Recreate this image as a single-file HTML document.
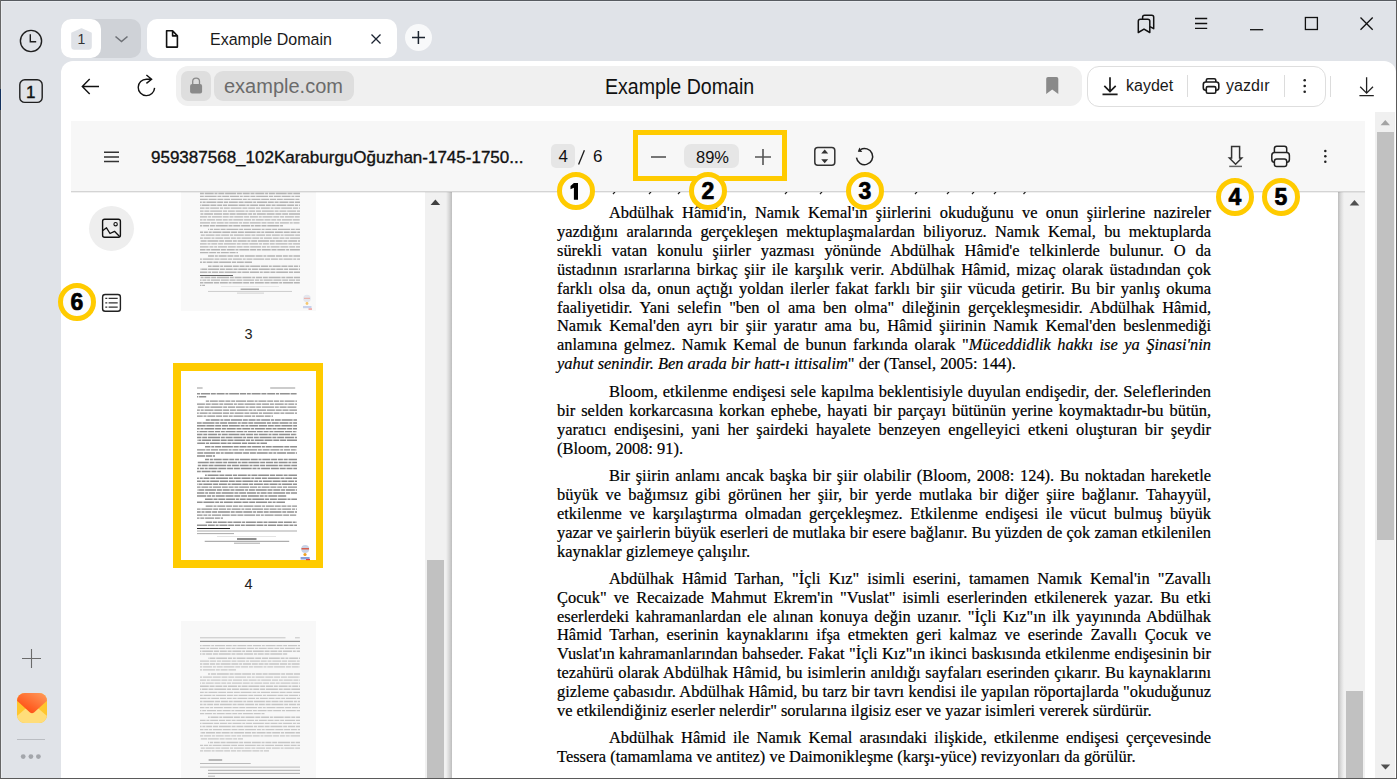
<!DOCTYPE html><html><head><meta charset="utf-8"><style>
*{box-sizing:border-box;margin:0;padding:0}
html,body{width:1397px;height:779px;overflow:hidden}
body{position:relative;background:#e0e3e8;font-family:"Liberation Sans",sans-serif;color:#000}
.a{position:absolute}
svg.a{overflow:visible}
.tx{position:absolute;white-space:nowrap}
.ln{position:absolute;left:557px;width:654px;font-family:"Liberation Serif",serif;font-size:16.45px;line-height:19px;color:#000;white-space:nowrap;text-align:justify;text-align-last:justify;-webkit-text-stroke:0.2px #000}
.ln.l{text-align-last:left}
.ln.i1{left:609px;width:602px}
.num{position:absolute;width:38px;height:38px;border-radius:50%;border:5px solid #ffcb00;background:#fcfcfc;font-weight:bold;font-size:23px;line-height:28.8px;text-align:center;color:#000;-webkit-text-stroke:0.7px #000}
</style></head><body>
<div class="a" style="left:0;top:0;width:1397px;height:1px;background:#575b60"></div>
<div class="a" style="left:0;top:0;width:1px;height:779px;background:#666"></div>
<div class="a" style="left:1px;top:1px;width:1395px;height:1px;background:#e9ecf0"></div>
<div class="a" style="left:1px;top:1px;width:1px;height:777px;background:#e9ecf0"></div>
<div class="a" style="left:0;top:89px;width:1px;height:21px;background:#15325e"></div>
<div class="a" style="left:61px;top:19px;width:80px;height:39px;background:#cfd2d7;border-radius:10px"></div>
<div class="a" style="left:61px;top:19px;width:40px;height:39px;background:#fff;border-radius:10px"></div>
<div class="a" style="left:147px;top:19px;width:250px;height:39px;background:#fff;border-radius:10px"></div>
<div class="tx" style="left:210px;top:29px;font-size:16px;line-height:22px;color:#1a1a1a;transform:scaleY(1.07);transform-origin:0 17px">Example Domain</div>
<div class="a" style="left:405px;top:24px;width:27px;height:27px;border-radius:50%;background:#f8f9fa"></div>
<div class="a" style="left:61px;top:61px;width:1335px;height:717px;background:#fff;border-radius:12px 12px 0 0"></div>
<div class="a" style="left:176px;top:66px;width:906px;height:40px;background:#f0f0f0;border-radius:12px"></div>
<div class="a" style="left:181px;top:71px;width:30px;height:30px;background:#dedede;border-radius:7px"></div>
<div class="a" style="left:214px;top:71px;width:140px;height:30px;background:#dedede;border-radius:9px"></div>
<div class="tx" style="left:224px;top:74px;font-size:20px;line-height:24px;color:#6b6b6b">example.com</div>
<div class="tx" style="left:605px;top:74px;font-size:19.6px;line-height:24px;color:#111;transform:scaleY(1.09);transform-origin:0 19px;margin-top:1.2px">Example Domain</div>
<div class="a" style="left:1087px;top:66px;width:239px;height:41px;border:1px solid #dedede;border-radius:12px;background:#fff"></div>
<div class="tx" style="left:1126px;top:76px;font-size:16px;line-height:20px;color:#1a1a1a">kaydet</div>
<div class="tx" style="left:1226px;top:76px;font-size:16px;line-height:20px;color:#1a1a1a">yazdır</div>
<div class="a" style="left:1187px;top:75px;width:1px;height:22px;background:#dcdcdc"></div>
<div class="a" style="left:1284px;top:75px;width:1px;height:22px;background:#dcdcdc"></div>
<div class="a" style="left:1330px;top:76px;width:1px;height:21px;background:#dcdcdc"></div>
<div class="ln i1" style="top:203.0px">Abdülhak Hâmid'in, Namık Kemal'ın şiirlerini okuduğunu ve onun şiirlerine nazireler</div>
<div class="ln " style="top:221.9px">yazdığını aralarında gerçekleşen mektuplaşmalardan biliyoruz. Namık Kemal, bu mektuplarda</div>
<div class="ln " style="top:240.8px">sürekli vatan konulu şiirler yazması yönünde Abdülhak Hâmid'e telkinlerde bulunur. O da</div>
<div class="ln " style="top:259.7px">üstadının ısrarlarına birkaç şiir ile karşılık verir. Abdülhak Hâmid, mizaç olarak üstadından çok</div>
<div class="ln " style="top:278.6px">farklı olsa da, onun açtığı yoldan ilerler fakat farklı bir şiir vücuda getirir. Bu bir yanlış okuma</div>
<div class="ln " style="top:297.5px">faaliyetidir. Yani selefin "ben ol ama ben olma" dileğinin gerçekleşmesidir. Abdülhak Hâmid,</div>
<div class="ln " style="top:316.4px">Namık Kemal'den ayrı bir şiir yaratır ama bu, Hâmid şiirinin Namık Kemal'den beslenmediği</div>
<div class="ln " style="top:335.3px">anlamına gelmez. Namık Kemal de bunun farkında olarak "<i>Müceddidlik hakkı ise ya Şinasi'nin</i></div>
<div class="ln l" style="top:354.2px"><i>yahut senindir. Ben arada bir hatt-ı ittisalim</i>" der (Tansel, 2005: 144).</div>
<div class="ln i1" style="top:381.9px">Bloom, etkilenme endişesi sele kapılma beklentisiyle duyulan endişedir, der. Seleflerinden</div>
<div class="ln " style="top:400.8px">bir selden korkarcasına korkan ephebe, hayati bir parçayı bütünün yerine koymaktadır-bu bütün,</div>
<div class="ln " style="top:419.7px">yaratıcı endişesini, yani her şairdeki hayalete benzeyen engelleyici etkeni oluşturan bir şeydir</div>
<div class="ln l" style="top:438.6px">(Bloom, 2008: 91).</div>
<div class="ln i1" style="top:466.3px">Bir şiirin anlamı ancak başka bir şiir olabilir (Bloom, 2008: 124). Bu noktadan hareketle</div>
<div class="ln " style="top:485.2px">büyük ve bağımsız gibi görünen her şiir, bir yerde mutlaka bir diğer şiire bağlanır. Tahayyül,</div>
<div class="ln " style="top:504.1px">etkilenme ve karşılaştırma olmadan gerçekleşmez. Etkilenme endişesi ile vücut bulmuş büyük</div>
<div class="ln " style="top:523.0px">yazar ve şairlerin büyük eserleri de mutlaka bir esere bağlanır. Bu yüzden de çok zaman etkilenilen</div>
<div class="ln l" style="top:541.9px">kaynaklar gizlemeye çalışılır.</div>
<div class="ln i1" style="top:568.7px">Abdülhak Hâmid Tarhan, "İçli Kız" isimli eserini, tamamen Namık Kemal'in "Zavallı</div>
<div class="ln " style="top:587.6px">Çocuk" ve Recaizade Mahmut Ekrem'in "Vuslat" isimli eserlerinden etkilenerek yazar. Bu etki</div>
<div class="ln " style="top:606.5px">eserlerdeki kahramanlardan ele alınan konuya değin uzanır. "İçli Kız"ın ilk yayınında Abdülhak</div>
<div class="ln " style="top:625.4px">Hâmid Tarhan, eserinin kaynaklarını ifşa etmekten geri kalmaz ve eserinde Zavallı Çocuk ve</div>
<div class="ln " style="top:644.3px">Vuslat'ın kahramanlarından bahseder. Fakat "İçli Kız"ın ikinci baskısında etkilenme endişesinin bir</div>
<div class="ln " style="top:663.2px">tezahürü olarak Abdülhak Hâmid, bu isimlerin anıldığı sayfaları eserinden çıkarır. Bu kaynaklarını</div>
<div class="ln " style="top:682.1px">gizleme çabasıdır. Abdülhak Hâmid, bu tarz bir tavrı kendisi ile yapılan röportajlarda "okuduğunuz</div>
<div class="ln l" style="top:701.0px">ve etkilendiğiniz eserler nelerdir" sorularına ilgisiz eser ve yazar isimleri vererek sürdürür.</div>
<div class="ln i1" style="top:728.4px">Abdülhak Hâmid ile Namık Kemal arasındaki ilişkide, etkilenme endişesi çerçevesinde</div>
<div class="ln l" style="top:747.3px">Tessera (tamamlama ve antitez) ve Daimonikleşme (karşı-yüce) revizyonları da görülür.</div>
<svg class="a" style="left:0;top:0" width="1397" height="779"><path d="M615.0 191.8L613.0 194M651.0 191.8L649.0 194M680.0 191.8L678.0 194M787.0 191.8L785.0 194M822.0 191.8L820.0 194M917.0 191.8L915.0 194M949.0 191.8L947.0 194M974.0 191.8L972.0 194M996.0 191.8L994.0 194M1025.5 191.8L1023.5 194" stroke="#222" stroke-width="1.2" fill="none"/></svg>
<div class="a" style="left:425px;top:192px;width:27px;height:586px;background:linear-gradient(to right,#f1f1f1 0,#f1f1f1 21px,#d9d9d9 24px,#bdbdbd 27px)"></div>
<div class="a" style="left:427px;top:560px;width:17px;height:218px;background:#c1c1c1"></div>
<div class="a" style="left:1338px;top:192px;width:27px;height:586px;background:linear-gradient(to right,#bdbdbd 0,#dcdcdc 3px,#f1f1f1 6px,#f1f1f1 27px)"></div>
<div class="a" style="left:1346px;top:691px;width:17px;height:87px;background:#c1c1c1"></div>
<div class="a" style="left:1375px;top:112px;width:20px;height:666px;background:#f0f0f0"></div>
<div class="a" style="left:1377px;top:132px;width:17px;height:408px;background:#c1c1c1"></div>
<div class="a" style="left:71px;top:121px;width:1294px;height:70px;background:#f7f7f7"></div>
<div class="a" style="left:71px;top:191px;width:1294px;height:1px;background:#d4d4d4"></div>
<div class="tx" style="left:151px;top:147.5px;font-size:17px;line-height:20px;color:#111;-webkit-text-stroke:0.35px #111">959387568_102KaraburguOğuzhan-1745-1750...</div>
<div class="a" style="left:551px;top:144px;width:24px;height:24px;background:#e6e6e6;border-radius:5px"></div>
<div class="tx" style="left:558.5px;top:147px;font-size:17px;line-height:20px;color:#111">4</div>
<svg class="a" style="left:0;top:0" width="1397" height="779"><path d="M578.6 164.6L584.4 150.2" stroke="#1a1a1a" stroke-width="1.3"/></svg>
<div class="tx" style="left:593px;top:147px;font-size:17px;line-height:20px;color:#111">6</div>
<div class="a" style="left:684px;top:144px;width:55px;height:24px;background:#e6e6e6;border-radius:7px"></div>
<div class="tx" style="left:696px;top:147px;font-size:16.5px;line-height:20px;color:#111">89%</div>
<div class="a" style="left:89px;top:206px;width:45px;height:45px;border-radius:50%;background:#eeeeee"></div>
<div class="a" style="left:71px;top:192px;width:354px;height:586px;overflow:hidden"><div class="a" style="left:-71px;top:-192px;width:1397px;height:779px">
<div class="a" style="left:181px;top:180px;width:135px;height:131px;background:#f9f9f9"></div>
<div class="tx" style="left:244.5px;top:326px;font-size:14.5px;line-height:16px;color:#222">3</div>
<div class="a" style="left:173px;top:363px;width:150px;height:205px;background:#ffcb00"></div>
<div class="a" style="left:181px;top:371px;width:135px;height:189px;background:#fff"></div>
<div class="tx" style="left:244.5px;top:576px;font-size:14.5px;line-height:16px;color:#222">4</div>
<div class="a" style="left:181px;top:621px;width:135px;height:170px;background:#f8f8f8"></div>
<svg class="a" style="left:0;top:0" width="1397" height="779"><line x1="200.0" y1="193.50" x2="300.0" y2="193.50" stroke="#b6b6b6" stroke-width="1.35" stroke-dasharray="7 0.8 4 0.8 9 0.8 3 0.8 6 0.8 11 0.8 5 0.8" stroke-dashoffset="7.9"/>
<line x1="200.0" y1="196.43" x2="300.0" y2="196.43" stroke="#b6b6b6" stroke-width="1.35" stroke-dasharray="9 0.8 3 0.8 6 0.8 5 0.8 12 0.8 4 0.8 7 0.8" stroke-dashoffset="21.6"/>
<line x1="200.0" y1="199.36" x2="300.0" y2="199.36" stroke="#b6b6b6" stroke-width="1.35" stroke-dasharray="6 0.8 6 0.8 11 0.8 4 0.8 3 0.8 9 0.8 8 0.8" stroke-dashoffset="35.2"/>
<line x1="200.0" y1="202.29" x2="300.0" y2="202.29" stroke="#b6b6b6" stroke-width="1.35" stroke-dasharray="5 0.8 8 0.8 3 0.8 10 0.8 6 0.8 4 0.8 9 0.8" stroke-dashoffset="12.0"/>
<line x1="200.0" y1="205.22" x2="300.0" y2="205.22" stroke="#b6b6b6" stroke-width="1.35" stroke-dasharray="4 0.8 10 0.8 7 0.8 3 0.8 8 0.8 6 0.8 5 0.8" stroke-dashoffset="25.6"/>
<line x1="200.0" y1="208.15" x2="300.0" y2="208.15" stroke="#b6b6b6" stroke-width="1.35" stroke-dasharray="7 0.8 4 0.8 9 0.8 3 0.8 6 0.8 11 0.8 5 0.8" stroke-dashoffset="2.4"/>
<line x1="200.0" y1="211.08" x2="300.0" y2="211.08" stroke="#b6b6b6" stroke-width="1.35" stroke-dasharray="9 0.8 3 0.8 6 0.8 5 0.8 12 0.8 4 0.8 7 0.8" stroke-dashoffset="16.0"/>
<line x1="200.0" y1="214.01" x2="300.0" y2="214.01" stroke="#b6b6b6" stroke-width="1.35" stroke-dasharray="6 0.8 6 0.8 11 0.8 4 0.8 3 0.8 9 0.8 8 0.8" stroke-dashoffset="29.8"/>
<line x1="200.0" y1="216.94" x2="300.0" y2="216.94" stroke="#b6b6b6" stroke-width="1.35" stroke-dasharray="5 0.8 8 0.8 3 0.8 10 0.8 6 0.8 4 0.8 9 0.8" stroke-dashoffset="6.5"/>
<line x1="200.0" y1="219.87" x2="300.0" y2="219.87" stroke="#b6b6b6" stroke-width="1.35" stroke-dasharray="4 0.8 10 0.8 7 0.8 3 0.8 8 0.8 6 0.8 5 0.8" stroke-dashoffset="20.1"/>
<line x1="200.0" y1="222.80" x2="300.0" y2="222.80" stroke="#b6b6b6" stroke-width="1.35" stroke-dasharray="7 0.8 4 0.8 9 0.8 3 0.8 6 0.8 11 0.8 5 0.8" stroke-dashoffset="33.9"/>
<line x1="200.0" y1="225.73" x2="283.0" y2="225.73" stroke="#b6b6b6" stroke-width="1.35" stroke-dasharray="9 0.8 3 0.8 6 0.8 5 0.8 12 0.8 4 0.8 7 0.8" stroke-dashoffset="10.5"/>
<line x1="208.0" y1="229.30" x2="300.0" y2="229.30" stroke="#b6b6b6" stroke-width="1.35" stroke-dasharray="9 0.8 3 0.8 6 0.8 5 0.8 12 0.8 4 0.8 7 0.8" stroke-dashoffset="7.8"/>
<line x1="200.0" y1="232.22" x2="300.0" y2="232.22" stroke="#b6b6b6" stroke-width="1.35" stroke-dasharray="6 0.8 6 0.8 11 0.8 4 0.8 3 0.8 9 0.8 8 0.8" stroke-dashoffset="21.5"/>
<line x1="200.0" y1="235.14" x2="300.0" y2="235.14" stroke="#b6b6b6" stroke-width="1.35" stroke-dasharray="5 0.8 8 0.8 3 0.8 10 0.8 6 0.8 4 0.8 9 0.8" stroke-dashoffset="35.2"/>
<line x1="200.0" y1="238.06" x2="300.0" y2="238.06" stroke="#b6b6b6" stroke-width="1.35" stroke-dasharray="4 0.8 10 0.8 7 0.8 3 0.8 8 0.8 6 0.8 5 0.8" stroke-dashoffset="11.9"/>
<line x1="200.0" y1="240.98" x2="300.0" y2="240.98" stroke="#b6b6b6" stroke-width="1.35" stroke-dasharray="7 0.8 4 0.8 9 0.8 3 0.8 6 0.8 11 0.8 5 0.8" stroke-dashoffset="25.6"/>
<line x1="200.0" y1="243.90" x2="300.0" y2="243.90" stroke="#b6b6b6" stroke-width="1.35" stroke-dasharray="9 0.8 3 0.8 6 0.8 5 0.8 12 0.8 4 0.8 7 0.8" stroke-dashoffset="2.3"/>
<line x1="200.0" y1="246.82" x2="300.0" y2="246.82" stroke="#b6b6b6" stroke-width="1.35" stroke-dasharray="6 0.8 6 0.8 11 0.8 4 0.8 3 0.8 9 0.8 8 0.8" stroke-dashoffset="16.0"/>
<line x1="200.0" y1="249.74" x2="300.0" y2="249.74" stroke="#b6b6b6" stroke-width="1.35" stroke-dasharray="5 0.8 8 0.8 3 0.8 10 0.8 6 0.8 4 0.8 9 0.8" stroke-dashoffset="29.7"/>
<line x1="200.0" y1="252.66" x2="238.0" y2="252.66" stroke="#b6b6b6" stroke-width="1.35" stroke-dasharray="4 0.8 10 0.8 7 0.8 3 0.8 8 0.8 6 0.8 5 0.8" stroke-dashoffset="6.4"/>
<line x1="208.0" y1="256.00" x2="300.0" y2="256.00" stroke="#b6b6b6" stroke-width="1.35" stroke-dasharray="4 0.8 10 0.8 7 0.8 3 0.8 8 0.8 6 0.8 5 0.8" stroke-dashoffset="16.6"/>
<line x1="200.0" y1="259.10" x2="300.0" y2="259.10" stroke="#b6b6b6" stroke-width="1.35" stroke-dasharray="7 0.8 4 0.8 9 0.8 3 0.8 6 0.8 11 0.8 5 0.8" stroke-dashoffset="30.3"/>
<line x1="200.0" y1="262.20" x2="252.0" y2="262.20" stroke="#b6b6b6" stroke-width="1.35" stroke-dasharray="9 0.8 3 0.8 6 0.8 5 0.8 12 0.8 4 0.8 7 0.8" stroke-dashoffset="7.0"/>
<line x1="208.0" y1="266.20" x2="300.0" y2="266.20" stroke="#b6b6b6" stroke-width="1.35" stroke-dasharray="4 0.8 10 0.8 7 0.8 3 0.8 8 0.8 6 0.8 5 0.8" stroke-dashoffset="11.2"/>
<line x1="200.0" y1="269.20" x2="300.0" y2="269.20" stroke="#b6b6b6" stroke-width="1.35" stroke-dasharray="7 0.8 4 0.8 9 0.8 3 0.8 6 0.8 11 0.8 5 0.8" stroke-dashoffset="24.9"/>
<line x1="200.0" y1="272.20" x2="300.0" y2="272.20" stroke="#b6b6b6" stroke-width="1.35" stroke-dasharray="9 0.8 3 0.8 6 0.8 5 0.8 12 0.8 4 0.8 7 0.8" stroke-dashoffset="1.6"/>
<rect x="200.0" y="275.05" width="33.0" height="0.9" fill="#555"/>
<line x1="200.0" y1="277.50" x2="300.0" y2="277.50" stroke="#b6b6b6" stroke-width="1.35" stroke-dasharray="9 0.8 3 0.8 6 0.8 5 0.8 12 0.8 4 0.8 7 0.8" stroke-dashoffset="9.2"/>
<line x1="200.0" y1="280.10" x2="300.0" y2="280.10" stroke="#b6b6b6" stroke-width="1.35" stroke-dasharray="6 0.8 6 0.8 11 0.8 4 0.8 3 0.8 9 0.8 8 0.8" stroke-dashoffset="23.0"/>
<line x1="200.0" y1="282.70" x2="300.0" y2="282.70" stroke="#b6b6b6" stroke-width="1.35" stroke-dasharray="5 0.8 8 0.8 3 0.8 10 0.8 6 0.8 4 0.8 9 0.8" stroke-dashoffset="36.6"/>
<line x1="200.0" y1="285.30" x2="205.0" y2="285.30" stroke="#b6b6b6" stroke-width="1.35" stroke-dasharray="4 0.8 10 0.8 7 0.8 3 0.8 8 0.8 6 0.8 5 0.8" stroke-dashoffset="13.4"/>
<rect x="221.0" y="286.00" width="58.0" height="0.6" fill="#d8d8d8"/>
<rect x="240.6" y="288.60" width="18.4" height="1.2" fill="#999"/>
<rect x="208.0" y="290.95" width="84.0" height="0.9" fill="#c8c8c8"/>
<rect x="237.0" y="292.65" width="27.0" height="0.9" fill="#cccccc"/>
<rect x="197.0" y="387.50" width="5.6" height="1.0" fill="#999"/>
<rect x="270.2" y="387.50" width="25.0" height="1.0" fill="#999"/>
<line x1="197.0" y1="393.80" x2="297.0" y2="393.80" stroke="#939393" stroke-width="1.45" stroke-dasharray="5 0.8 8 0.8 3 0.8 10 0.8 6 0.8 4 0.8 9 0.8" stroke-dashoffset="36.8"/>
<line x1="197.0" y1="396.80" x2="207.0" y2="396.80" stroke="#939393" stroke-width="1.45" stroke-dasharray="4 0.8 10 0.8 7 0.8 3 0.8 8 0.8 6 0.8 5 0.8" stroke-dashoffset="13.5"/>
<line x1="205.0" y1="401.10" x2="297.0" y2="401.10" stroke="#939393" stroke-width="1.45" stroke-dasharray="4 0.8 10 0.8 7 0.8 3 0.8 8 0.8 6 0.8 5 0.8" stroke-dashoffset="22.4"/>
<line x1="197.0" y1="404.10" x2="297.0" y2="404.10" stroke="#939393" stroke-width="1.45" stroke-dasharray="7 0.8 4 0.8 9 0.8 3 0.8 6 0.8 11 0.8 5 0.8" stroke-dashoffset="36.1"/>
<line x1="197.0" y1="407.10" x2="297.0" y2="407.10" stroke="#939393" stroke-width="1.45" stroke-dasharray="9 0.8 3 0.8 6 0.8 5 0.8 12 0.8 4 0.8 7 0.8" stroke-dashoffset="12.8"/>
<line x1="197.0" y1="410.10" x2="297.0" y2="410.10" stroke="#939393" stroke-width="1.45" stroke-dasharray="6 0.8 6 0.8 11 0.8 4 0.8 3 0.8 9 0.8 8 0.8" stroke-dashoffset="26.5"/>
<line x1="197.0" y1="413.10" x2="297.0" y2="413.10" stroke="#939393" stroke-width="1.45" stroke-dasharray="5 0.8 8 0.8 3 0.8 10 0.8 6 0.8 4 0.8 9 0.8" stroke-dashoffset="3.2"/>
<line x1="197.0" y1="416.10" x2="273.0" y2="416.10" stroke="#939393" stroke-width="1.45" stroke-dasharray="4 0.8 10 0.8 7 0.8 3 0.8 8 0.8 6 0.8 5 0.8" stroke-dashoffset="16.9"/>
<line x1="205.0" y1="420.00" x2="297.0" y2="420.00" stroke="#939393" stroke-width="1.45" stroke-dasharray="7 0.8 4 0.8 9 0.8 3 0.8 6 0.8 11 0.8 5 0.8" stroke-dashoffset="7.0"/>
<line x1="197.0" y1="422.90" x2="297.0" y2="422.90" stroke="#939393" stroke-width="1.45" stroke-dasharray="9 0.8 3 0.8 6 0.8 5 0.8 12 0.8 4 0.8 7 0.8" stroke-dashoffset="20.7"/>
<line x1="197.0" y1="425.80" x2="297.0" y2="425.80" stroke="#939393" stroke-width="1.45" stroke-dasharray="6 0.8 6 0.8 11 0.8 4 0.8 3 0.8 9 0.8 8 0.8" stroke-dashoffset="34.4"/>
<line x1="197.0" y1="428.70" x2="297.0" y2="428.70" stroke="#939393" stroke-width="1.45" stroke-dasharray="5 0.8 8 0.8 3 0.8 10 0.8 6 0.8 4 0.8 9 0.8" stroke-dashoffset="11.1"/>
<line x1="197.0" y1="431.60" x2="297.0" y2="431.60" stroke="#939393" stroke-width="1.45" stroke-dasharray="4 0.8 10 0.8 7 0.8 3 0.8 8 0.8 6 0.8 5 0.8" stroke-dashoffset="24.8"/>
<line x1="197.0" y1="434.50" x2="297.0" y2="434.50" stroke="#939393" stroke-width="1.45" stroke-dasharray="7 0.8 4 0.8 9 0.8 3 0.8 6 0.8 11 0.8 5 0.8" stroke-dashoffset="1.5"/>
<line x1="197.0" y1="437.40" x2="297.0" y2="437.40" stroke="#939393" stroke-width="1.45" stroke-dasharray="9 0.8 3 0.8 6 0.8 5 0.8 12 0.8 4 0.8 7 0.8" stroke-dashoffset="15.2"/>
<line x1="197.0" y1="440.30" x2="297.0" y2="440.30" stroke="#939393" stroke-width="1.45" stroke-dasharray="6 0.8 6 0.8 11 0.8 4 0.8 3 0.8 9 0.8 8 0.8" stroke-dashoffset="28.9"/>
<line x1="197.0" y1="443.20" x2="267.0" y2="443.20" stroke="#939393" stroke-width="1.45" stroke-dasharray="5 0.8 8 0.8 3 0.8 10 0.8 6 0.8 4 0.8 9 0.8" stroke-dashoffset="5.6"/>
<line x1="205.0" y1="446.80" x2="297.0" y2="446.80" stroke="#939393" stroke-width="1.45" stroke-dasharray="7 0.8 4 0.8 9 0.8 3 0.8 6 0.8 11 0.8 5 0.8" stroke-dashoffset="16.1"/>
<line x1="197.0" y1="449.85" x2="297.0" y2="449.85" stroke="#939393" stroke-width="1.45" stroke-dasharray="9 0.8 3 0.8 6 0.8 5 0.8 12 0.8 4 0.8 7 0.8" stroke-dashoffset="29.8"/>
<line x1="197.0" y1="452.90" x2="297.0" y2="452.90" stroke="#939393" stroke-width="1.45" stroke-dasharray="6 0.8 6 0.8 11 0.8 4 0.8 3 0.8 9 0.8 8 0.8" stroke-dashoffset="6.5"/>
<line x1="197.0" y1="455.95" x2="215.0" y2="455.95" stroke="#939393" stroke-width="1.45" stroke-dasharray="5 0.8 8 0.8 3 0.8 10 0.8 6 0.8 4 0.8 9 0.8" stroke-dashoffset="20.2"/>
<line x1="205.0" y1="459.50" x2="297.0" y2="459.50" stroke="#939393" stroke-width="1.45" stroke-dasharray="4 0.8 10 0.8 7 0.8 3 0.8 8 0.8 6 0.8 5 0.8" stroke-dashoffset="18.5"/>
<line x1="197.0" y1="462.48" x2="297.0" y2="462.48" stroke="#939393" stroke-width="1.45" stroke-dasharray="7 0.8 4 0.8 9 0.8 3 0.8 6 0.8 11 0.8 5 0.8" stroke-dashoffset="32.2"/>
<line x1="197.0" y1="465.46" x2="297.0" y2="465.46" stroke="#939393" stroke-width="1.45" stroke-dasharray="9 0.8 3 0.8 6 0.8 5 0.8 12 0.8 4 0.8 7 0.8" stroke-dashoffset="8.9"/>
<line x1="197.0" y1="468.44" x2="297.0" y2="468.44" stroke="#939393" stroke-width="1.45" stroke-dasharray="6 0.8 6 0.8 11 0.8 4 0.8 3 0.8 9 0.8 8 0.8" stroke-dashoffset="22.5"/>
<line x1="197.0" y1="471.42" x2="221.0" y2="471.42" stroke="#939393" stroke-width="1.45" stroke-dasharray="5 0.8 8 0.8 3 0.8 10 0.8 6 0.8 4 0.8 9 0.8" stroke-dashoffset="36.2"/>
<line x1="205.0" y1="475.30" x2="297.0" y2="475.30" stroke="#939393" stroke-width="1.45" stroke-dasharray="7 0.8 4 0.8 9 0.8 3 0.8 6 0.8 11 0.8 5 0.8" stroke-dashoffset="30.4"/>
<line x1="197.0" y1="478.25" x2="297.0" y2="478.25" stroke="#939393" stroke-width="1.45" stroke-dasharray="9 0.8 3 0.8 6 0.8 5 0.8 12 0.8 4 0.8 7 0.8" stroke-dashoffset="7.1"/>
<line x1="197.0" y1="481.20" x2="297.0" y2="481.20" stroke="#939393" stroke-width="1.45" stroke-dasharray="6 0.8 6 0.8 11 0.8 4 0.8 3 0.8 9 0.8 8 0.8" stroke-dashoffset="20.8"/>
<line x1="197.0" y1="484.15" x2="297.0" y2="484.15" stroke="#939393" stroke-width="1.45" stroke-dasharray="5 0.8 8 0.8 3 0.8 10 0.8 6 0.8 4 0.8 9 0.8" stroke-dashoffset="34.5"/>
<line x1="197.0" y1="487.10" x2="297.0" y2="487.10" stroke="#939393" stroke-width="1.45" stroke-dasharray="4 0.8 10 0.8 7 0.8 3 0.8 8 0.8 6 0.8 5 0.8" stroke-dashoffset="11.2"/>
<line x1="197.0" y1="490.05" x2="297.0" y2="490.05" stroke="#939393" stroke-width="1.45" stroke-dasharray="7 0.8 4 0.8 9 0.8 3 0.8 6 0.8 11 0.8 5 0.8" stroke-dashoffset="24.9"/>
<line x1="197.0" y1="493.00" x2="297.0" y2="493.00" stroke="#939393" stroke-width="1.45" stroke-dasharray="9 0.8 3 0.8 6 0.8 5 0.8 12 0.8 4 0.8 7 0.8" stroke-dashoffset="1.6"/>
<line x1="197.0" y1="495.95" x2="287.0" y2="495.95" stroke="#939393" stroke-width="1.45" stroke-dasharray="6 0.8 6 0.8 11 0.8 4 0.8 3 0.8 9 0.8 8 0.8" stroke-dashoffset="15.3"/>
<line x1="205.0" y1="499.20" x2="297.0" y2="499.20" stroke="#939393" stroke-width="1.45" stroke-dasharray="9 0.8 3 0.8 6 0.8 5 0.8 12 0.8 4 0.8 7 0.8" stroke-dashoffset="30.5"/>
<line x1="197.0" y1="502.20" x2="285.0" y2="502.20" stroke="#939393" stroke-width="1.45" stroke-dasharray="6 0.8 6 0.8 11 0.8 4 0.8 3 0.8 9 0.8 8 0.8" stroke-dashoffset="7.2"/>
<line x1="205.0" y1="506.10" x2="297.0" y2="506.10" stroke="#939393" stroke-width="1.45" stroke-dasharray="4 0.8 10 0.8 7 0.8 3 0.8 8 0.8 6 0.8 5 0.8" stroke-dashoffset="14.9"/>
<line x1="197.0" y1="509.10" x2="297.0" y2="509.10" stroke="#939393" stroke-width="1.45" stroke-dasharray="7 0.8 4 0.8 9 0.8 3 0.8 6 0.8 11 0.8 5 0.8" stroke-dashoffset="28.6"/>
<line x1="197.0" y1="512.10" x2="297.0" y2="512.10" stroke="#939393" stroke-width="1.45" stroke-dasharray="9 0.8 3 0.8 6 0.8 5 0.8 12 0.8 4 0.8 7 0.8" stroke-dashoffset="5.3"/>
<line x1="197.0" y1="515.10" x2="297.0" y2="515.10" stroke="#939393" stroke-width="1.45" stroke-dasharray="6 0.8 6 0.8 11 0.8 4 0.8 3 0.8 9 0.8 8 0.8" stroke-dashoffset="19.0"/>
<line x1="197.0" y1="518.10" x2="223.0" y2="518.10" stroke="#939393" stroke-width="1.45" stroke-dasharray="5 0.8 8 0.8 3 0.8 10 0.8 6 0.8 4 0.8 9 0.8" stroke-dashoffset="32.7"/>
<line x1="205.0" y1="522.30" x2="297.0" y2="522.30" stroke="#939393" stroke-width="1.45" stroke-dasharray="5 0.8 8 0.8 3 0.8 10 0.8 6 0.8 4 0.8 9 0.8" stroke-dashoffset="28.1"/>
<line x1="197.0" y1="525.30" x2="297.0" y2="525.30" stroke="#939393" stroke-width="1.45" stroke-dasharray="4 0.8 10 0.8 7 0.8 3 0.8 8 0.8 6 0.8 5 0.8" stroke-dashoffset="4.8"/>
<rect x="197.0" y="528.00" width="33.0" height="1.0" fill="#222"/>
<rect x="197.0" y="530.50" width="100.0" height="1.0" fill="#aaa"/>
<rect x="197.0" y="533.10" width="37.0" height="1.0" fill="#aaa"/>
<rect x="217.0" y="536.10" width="59.0" height="0.6" fill="#d0d0d0"/>
<rect x="237.0" y="538.35" width="19.5" height="1.3" fill="#555"/>
<rect x="204.7" y="540.80" width="84.5" height="1.0" fill="#999"/>
<rect x="234.0" y="542.70" width="26.0" height="1.0" fill="#aaa"/>
<circle cx="305.2" cy="549" r="4" fill="#c9d3e6"/><rect x="301.5" y="548" width="7.5" height="1.5" fill="#d86050"/>
<circle cx="305" cy="554.5" r="1.6" fill="#f0a020"/><rect x="300.6" y="557" width="9" height="2.5" fill="#8aa0d8"/><rect x="306" y="559" width="4" height="1.2" fill="#e04040"/>
<rect x="200.0" y="637.30" width="85.5" height="1.0" fill="#c4c4c4"/>
<rect x="295.0" y="637.30" width="4.8" height="1.0" fill="#c4c4c4"/>
<rect x="200.0" y="640.85" width="100.0" height="0.9" fill="#777"/>
<line x1="200.0" y1="645.60" x2="300.0" y2="645.60" stroke="#c6c6c6" stroke-width="1.35" stroke-dasharray="5 0.8 8 0.8 3 0.8 10 0.8 6 0.8 4 0.8 9 0.8" stroke-dashoffset="3.4"/>
<line x1="200.0" y1="648.40" x2="300.0" y2="648.40" stroke="#c6c6c6" stroke-width="1.35" stroke-dasharray="4 0.8 10 0.8 7 0.8 3 0.8 8 0.8 6 0.8 5 0.8" stroke-dashoffset="17.1"/>
<line x1="200.0" y1="651.20" x2="300.0" y2="651.20" stroke="#c6c6c6" stroke-width="1.35" stroke-dasharray="7 0.8 4 0.8 9 0.8 3 0.8 6 0.8 11 0.8 5 0.8" stroke-dashoffset="30.8"/>
<line x1="200.0" y1="654.00" x2="288.0" y2="654.00" stroke="#c6c6c6" stroke-width="1.35" stroke-dasharray="9 0.8 3 0.8 6 0.8 5 0.8 12 0.8 4 0.8 7 0.8" stroke-dashoffset="7.5"/>
<line x1="208.0" y1="658.20" x2="300.0" y2="658.20" stroke="#c6c6c6" stroke-width="1.35" stroke-dasharray="6 0.8 6 0.8 11 0.8 4 0.8 3 0.8 9 0.8 8 0.8" stroke-dashoffset="5.4"/>
<line x1="200.0" y1="661.10" x2="300.0" y2="661.10" stroke="#c6c6c6" stroke-width="1.35" stroke-dasharray="5 0.8 8 0.8 3 0.8 10 0.8 6 0.8 4 0.8 9 0.8" stroke-dashoffset="19.1"/>
<line x1="200.0" y1="664.00" x2="300.0" y2="664.00" stroke="#c6c6c6" stroke-width="1.35" stroke-dasharray="4 0.8 10 0.8 7 0.8 3 0.8 8 0.8 6 0.8 5 0.8" stroke-dashoffset="32.8"/>
<line x1="200.0" y1="666.90" x2="300.0" y2="666.90" stroke="#c6c6c6" stroke-width="1.35" stroke-dasharray="7 0.8 4 0.8 9 0.8 3 0.8 6 0.8 11 0.8 5 0.8" stroke-dashoffset="9.5"/>
<line x1="200.0" y1="669.80" x2="236.0" y2="669.80" stroke="#c6c6c6" stroke-width="1.35" stroke-dasharray="9 0.8 3 0.8 6 0.8 5 0.8 12 0.8 4 0.8 7 0.8" stroke-dashoffset="23.2"/>
<line x1="208.0" y1="674.00" x2="300.0" y2="674.00" stroke="#c6c6c6" stroke-width="1.35" stroke-dasharray="9 0.8 3 0.8 6 0.8 5 0.8 12 0.8 4 0.8 7 0.8" stroke-dashoffset="17.4"/>
<line x1="200.0" y1="677.05" x2="300.0" y2="677.05" stroke="#c6c6c6" stroke-width="1.35" stroke-dasharray="6 0.8 6 0.8 11 0.8 4 0.8 3 0.8 9 0.8 8 0.8" stroke-dashoffset="31.1"/>
<line x1="200.0" y1="680.10" x2="300.0" y2="680.10" stroke="#c6c6c6" stroke-width="1.35" stroke-dasharray="5 0.8 8 0.8 3 0.8 10 0.8 6 0.8 4 0.8 9 0.8" stroke-dashoffset="7.8"/>
<line x1="200.0" y1="683.15" x2="300.0" y2="683.15" stroke="#c6c6c6" stroke-width="1.35" stroke-dasharray="4 0.8 10 0.8 7 0.8 3 0.8 8 0.8 6 0.8 5 0.8" stroke-dashoffset="21.5"/>
<line x1="200.0" y1="686.20" x2="300.0" y2="686.20" stroke="#c6c6c6" stroke-width="1.35" stroke-dasharray="7 0.8 4 0.8 9 0.8 3 0.8 6 0.8 11 0.8 5 0.8" stroke-dashoffset="35.2"/>
<line x1="200.0" y1="689.25" x2="300.0" y2="689.25" stroke="#c6c6c6" stroke-width="1.35" stroke-dasharray="9 0.8 3 0.8 6 0.8 5 0.8 12 0.8 4 0.8 7 0.8" stroke-dashoffset="11.9"/>
<line x1="200.0" y1="692.30" x2="300.0" y2="692.30" stroke="#c6c6c6" stroke-width="1.35" stroke-dasharray="6 0.8 6 0.8 11 0.8 4 0.8 3 0.8 9 0.8 8 0.8" stroke-dashoffset="25.6"/>
<line x1="200.0" y1="695.35" x2="300.0" y2="695.35" stroke="#c6c6c6" stroke-width="1.35" stroke-dasharray="5 0.8 8 0.8 3 0.8 10 0.8 6 0.8 4 0.8 9 0.8" stroke-dashoffset="2.3"/>
<line x1="200.0" y1="698.40" x2="300.0" y2="698.40" stroke="#c6c6c6" stroke-width="1.35" stroke-dasharray="4 0.8 10 0.8 7 0.8 3 0.8 8 0.8 6 0.8 5 0.8" stroke-dashoffset="16.0"/>
<line x1="200.0" y1="701.45" x2="300.0" y2="701.45" stroke="#c6c6c6" stroke-width="1.35" stroke-dasharray="7 0.8 4 0.8 9 0.8 3 0.8 6 0.8 11 0.8 5 0.8" stroke-dashoffset="29.7"/>
<line x1="200.0" y1="704.50" x2="300.0" y2="704.50" stroke="#c6c6c6" stroke-width="1.35" stroke-dasharray="9 0.8 3 0.8 6 0.8 5 0.8 12 0.8 4 0.8 7 0.8" stroke-dashoffset="6.4"/>
<line x1="200.0" y1="707.55" x2="300.0" y2="707.55" stroke="#c6c6c6" stroke-width="1.35" stroke-dasharray="6 0.8 6 0.8 11 0.8 4 0.8 3 0.8 9 0.8 8 0.8" stroke-dashoffset="20.1"/>
<line x1="200.0" y1="710.60" x2="300.0" y2="710.60" stroke="#c6c6c6" stroke-width="1.35" stroke-dasharray="5 0.8 8 0.8 3 0.8 10 0.8 6 0.8 4 0.8 9 0.8" stroke-dashoffset="33.8"/>
<line x1="200.0" y1="713.65" x2="265.0" y2="713.65" stroke="#c6c6c6" stroke-width="1.35" stroke-dasharray="4 0.8 10 0.8 7 0.8 3 0.8 8 0.8 6 0.8 5 0.8" stroke-dashoffset="10.5"/>
<line x1="208.0" y1="717.20" x2="300.0" y2="717.20" stroke="#c6c6c6" stroke-width="1.35" stroke-dasharray="5 0.8 8 0.8 3 0.8 10 0.8 6 0.8 4 0.8 9 0.8" stroke-dashoffset="3.3"/>
<line x1="200.0" y1="720.30" x2="300.0" y2="720.30" stroke="#c6c6c6" stroke-width="1.35" stroke-dasharray="4 0.8 10 0.8 7 0.8 3 0.8 8 0.8 6 0.8 5 0.8" stroke-dashoffset="17.0"/>
<line x1="200.0" y1="723.40" x2="300.0" y2="723.40" stroke="#c6c6c6" stroke-width="1.35" stroke-dasharray="7 0.8 4 0.8 9 0.8 3 0.8 6 0.8 11 0.8 5 0.8" stroke-dashoffset="30.7"/>
<line x1="200.0" y1="726.50" x2="300.0" y2="726.50" stroke="#c6c6c6" stroke-width="1.35" stroke-dasharray="9 0.8 3 0.8 6 0.8 5 0.8 12 0.8 4 0.8 7 0.8" stroke-dashoffset="7.4"/>
<line x1="200.0" y1="729.60" x2="300.0" y2="729.60" stroke="#c6c6c6" stroke-width="1.35" stroke-dasharray="6 0.8 6 0.8 11 0.8 4 0.8 3 0.8 9 0.8 8 0.8" stroke-dashoffset="21.1"/>
<line x1="200.0" y1="732.70" x2="300.0" y2="732.70" stroke="#c6c6c6" stroke-width="1.35" stroke-dasharray="5 0.8 8 0.8 3 0.8 10 0.8 6 0.8 4 0.8 9 0.8" stroke-dashoffset="34.8"/>
<line x1="200.0" y1="735.80" x2="300.0" y2="735.80" stroke="#c6c6c6" stroke-width="1.35" stroke-dasharray="4 0.8 10 0.8 7 0.8 3 0.8 8 0.8 6 0.8 5 0.8" stroke-dashoffset="11.5"/>
<line x1="200.0" y1="738.90" x2="243.0" y2="738.90" stroke="#c6c6c6" stroke-width="1.35" stroke-dasharray="7 0.8 4 0.8 9 0.8 3 0.8 6 0.8 11 0.8 5 0.8" stroke-dashoffset="25.2"/>
<line x1="208.0" y1="742.50" x2="300.0" y2="742.50" stroke="#c6c6c6" stroke-width="1.35" stroke-dasharray="9 0.8 3 0.8 6 0.8 5 0.8 12 0.8 4 0.8 7 0.8" stroke-dashoffset="7.8"/>
<line x1="200.0" y1="745.30" x2="300.0" y2="745.30" stroke="#c6c6c6" stroke-width="1.35" stroke-dasharray="6 0.8 6 0.8 11 0.8 4 0.8 3 0.8 9 0.8 8 0.8" stroke-dashoffset="21.4"/>
<line x1="200.0" y1="748.10" x2="300.0" y2="748.10" stroke="#c6c6c6" stroke-width="1.35" stroke-dasharray="5 0.8 8 0.8 3 0.8 10 0.8 6 0.8 4 0.8 9 0.8" stroke-dashoffset="35.2"/>
<line x1="200.0" y1="750.90" x2="269.0" y2="750.90" stroke="#c6c6c6" stroke-width="1.35" stroke-dasharray="4 0.8 10 0.8 7 0.8 3 0.8 8 0.8 6 0.8 5 0.8" stroke-dashoffset="11.8"/>
<rect x="208.6" y="759.35" width="13.6" height="1.3" fill="#999"/>
<rect x="200.0" y="763.00" width="50.7" height="1.0" fill="#bbb"/>
<rect x="200.0" y="766.60" width="100.0" height="1.0" fill="#bbb"/>
<rect x="208.0" y="769.80" width="92.0" height="1.0" fill="#aaa"/>
<rect x="208.0" y="772.90" width="92.0" height="1.0" fill="#aaa"/>
<rect x="208.0" y="775.70" width="7.0" height="1.0" fill="#bbb"/>
<circle cx="307" cy="298.5" r="3.8" fill="#e4e7ee"/><rect x="304" y="297.8" width="6" height="1.1" fill="#eab0a8"/>
<circle cx="307" cy="303.5" r="1.4" fill="#f6c870"/><rect x="303" y="306" width="8.5" height="2.2" fill="#c8d2ec"/><rect x="308.5" y="308.5" width="3.5" height="1.1" fill="#e88080"/></svg>
</div></div>
<div class="a" style="left:71px;top:192px;width:1294px;height:1px;background:rgba(0,0,0,0.06)"></div>
<svg class="a" style="left:0;top:0" width="1397" height="779" viewBox="0 0 1397 779">
<g fill="none" stroke-linecap="butt">
  <!-- left sidebar -->
  <circle cx="31" cy="41" r="10.6" stroke="#1f1f1f" stroke-width="1.4"/>
  <path d="M30.3 34.3V41.7H36.2" stroke="#1f1f1f" stroke-width="1.4"/>
  <rect x="19.8" y="79.8" width="22.4" height="22.6" rx="5" stroke="#1f1f1f" stroke-width="1.4"/>
  <path d="M31.5 649V668M22 658.5H41" stroke="#6b6b6b" stroke-width="1.1"/>
  <path d="M17 739.5H45" stroke="#babdc2" stroke-width="1"/>
  <circle cx="23.2" cy="756.6" r="2.4" fill="#a3a6ab"/><circle cx="30.9" cy="756.6" r="2.4" fill="#a3a6ab"/><circle cx="38.4" cy="756.6" r="2.4" fill="#a3a6ab"/>
  <!-- tab strip -->
  <path d="M81.5 29 L91 33.2 V46.5 Q91 49 88.5 49 H74.5 Q72 49 72 46.5 V33.2 Z" fill="#dfe2e7" stroke="#dfe2e7" stroke-width="1.6" stroke-linejoin="round"/>
  <path d="M115.5 36.5L121.5 41.5L127.5 36.5" stroke="#6e7176" stroke-width="1.6"/>
  <path d="M166.6 30.8H172.6L177.4 35.9V47.1H166.6Z M172.6 30.8V35.9H177.4" stroke="#111" stroke-width="1.6" stroke-linejoin="round"/>
  <path d="M371.5 34.5L380.5 43.5M380.5 34.5L371.5 43.5" stroke="#1a2230" stroke-width="1.3"/>
  <path d="M418.4 31V44M412 37.4H425" stroke="#1d2530" stroke-width="1.5"/>
  <!-- window controls -->
  <path d="M1142.6 19.2V17.3Q1142.6 15.3 1144.6 15.3H1151.7Q1153.7 15.3 1153.7 17.3V28.7L1149.9 26.6" stroke="#111" stroke-width="1.5" stroke-linejoin="round"/>
  <path d="M1138.3 32.5V21.3Q1138.3 19.3 1140.3 19.3H1147.8Q1149.8 19.3 1149.8 21.3V32.5L1144 29.1Z" stroke="#111" stroke-width="1.5" stroke-linejoin="round"/>
  <path d="M1195 18.5H1207.2M1195 23.5H1207.2M1195 28.4H1207.2" stroke="#111" stroke-width="1.3"/>
  <path d="M1250 29.7H1263.2" stroke="#111" stroke-width="1.3"/>
  <rect x="1305.4" y="17.5" width="12" height="12" stroke="#111" stroke-width="1.3"/>
  <path d="M1360.5 17.5L1372.7 29.7M1372.7 17.5L1360.5 29.7" stroke="#111" stroke-width="1.3"/>
  <!-- nav -->
  <path d="M99 86.5H82.8M89.7 79L82.3 86.5L89.7 94" stroke="#111" stroke-width="1.4"/>
  <path d="M154.6 87.9A8.2 8.2 0 1 1 146.4 79.2H151.3M146.4 75L151.6 79.2L146.4 83.4" stroke="#111" stroke-width="1.4"/>
  <path d="M192.7 84.5V81.6A3.3 3.3 0 0 1 199.5 81.6V84.5" stroke="#8a8a8a" stroke-width="1.3"/>
  <rect x="190.1" y="84" width="12" height="9.6" rx="2" fill="#8a8a8a"/>
  <path d="M1046.2 78.8Q1046.2 77 1048 77H1056.5Q1058.3 77 1058.3 78.8V94L1052.2 89.6L1046.2 94Z" fill="#8a8a8a"/>
  <path d="M1110 77.2V91M1104.3 85.8L1110 91.5L1115.7 85.8M1102.5 94.3H1117.6" stroke="#1a1a1a" stroke-width="1.7"/>
  <path d="M1206.3 82V80.3Q1206.3 78.7 1207.9 78.7H1214.2Q1215.8 78.7 1215.8 80.3V82" stroke="#1a1a1a" stroke-width="1.6"/>
  <rect x="1203.3" y="82" width="15.5" height="8.3" rx="2.5" stroke="#1a1a1a" stroke-width="1.6"/>
  <rect x="1206.3" y="86.6" width="9.5" height="6.6" rx="1.5" fill="#fff" stroke="#1a1a1a" stroke-width="1.6"/>
  <circle cx="1304.7" cy="80.2" r="1.3" fill="#222"/><circle cx="1304.7" cy="86" r="1.3" fill="#222"/><circle cx="1304.7" cy="91.8" r="1.3" fill="#222"/>
  <path d="M1366.6 77.3V93.2M1360.2 86.8L1366.6 93.2L1373 86.8M1359.4 95.6H1373.8" stroke="#222" stroke-width="1.3"/>
  <!-- pdf toolbar -->
  <path d="M104 152.2H119M104 157H119M104 161.6H119" stroke="#333" stroke-width="1.5"/>
  <path d="M651 157H666" stroke="#555" stroke-width="1.6"/>
  <path d="M763 149V165M755 157H771" stroke="#555" stroke-width="1.6"/>
  <rect x="814.8" y="147.6" width="20" height="17.6" rx="3" stroke="#333" stroke-width="1.5"/>
  <path d="M824.7 149.6L828.2 153.6H821.2Z M821.2 159.3H828.2L824.7 163.3Z" fill="#333"/>
  <path d="M856.5 157.6A8.1 8.1 0 1 0 860.4 149.6" stroke="#222" stroke-width="1.5"/>
  <path d="M859.4 147.4L857.8 151.8L862.2 152Z" fill="#222"/>
  <path d="M1231.6 146.5H1239.6V158H1241.8L1235.6 164.2L1229.4 158H1231.6Z" stroke="#333" stroke-width="1.5" stroke-linejoin="miter"/>
  <path d="M1229.2 166.4H1242" stroke="#666" stroke-width="1.5"/>
  <path d="M1274.4 152.6V148.6Q1274.4 146.3 1276.7 146.3H1284.4Q1286.7 146.3 1286.7 148.6V152.6" stroke="#222" stroke-width="1.5"/>
  <rect x="1271.8" y="152.6" width="17.6" height="9.8" rx="2.8" stroke="#222" stroke-width="1.5"/>
  <rect x="1274.4" y="158.9" width="12.3" height="7.7" rx="2.3" fill="#f7f7f7" stroke="#222" stroke-width="1.5"/>
  <circle cx="1325.3" cy="151" r="1.25" fill="#222"/><circle cx="1325.3" cy="156.3" r="1.25" fill="#222"/><circle cx="1325.3" cy="161.8" r="1.25" fill="#222"/>
  <!-- sidebar icons -->
  <rect x="102.6" y="219.3" width="17.8" height="18" rx="2" stroke="#111" stroke-width="1.4"/>
  <path d="M102.9 230.6L106.5 227.8L110 233.5L114.5 231.3L119.8 236.8" stroke="#111" stroke-width="1.3" stroke-linejoin="round"/>
  <circle cx="115.6" cy="224.2" r="1.7" stroke="#111" stroke-width="1.1"/>
  <rect x="102.6" y="294.5" width="17.8" height="16.8" rx="2.5" stroke="#222" stroke-width="1.4"/>
  <path d="M105.3 298.4H107.3M105.3 302.9H107.3M105.3 307.1H107.3M108.6 298.4H117.7M108.6 302.9H117.7M108.6 307.1H117.7" stroke="#333" stroke-width="1.4"/>
  <!-- scrollbar arrows -->
  <path d="M435.4 199.6L440.2 205H430.6Z" fill="#404040"/>
  <path d="M1354.5 200L1359.3 205.4H1349.7Z" fill="#505050"/>
  <path d="M1385.3 120L1390 125.2H1380.6Z" fill="#a3a3a3"/>
  <path d="M1385.5 769.6L1390.2 764.4H1380.8Z" fill="#505050"/>
</g>
<!-- mail icon -->
<defs>
  <linearGradient id="mg" x1="0" y1="1" x2="1" y2="0"><stop offset="0" stop-color="#ff3a00"/><stop offset="1" stop-color="#ffa060"/></linearGradient>
  <clipPath id="mc"><rect x="17" y="693" width="30" height="30" rx="8"/></clipPath>
</defs>
<g clip-path="url(#mc)">
  <rect x="17" y="693" width="30" height="30" fill="#ffc62e"/>
  <path d="M17 716L32 703L47 716V723H17Z" fill="#ffdd7a"/>
  <path d="M15 693H49V699L34 712.5Q32 714 30 712.5L15 699Z" fill="url(#mg)"/>
</g>
</svg>

<div class="tx" style="left:77.5px;top:31px;font-size:14px;line-height:16px;color:#333">1</div>
<div class="tx" style="left:26px;top:84px;font-size:17px;line-height:18px;color:#111;-webkit-text-stroke:0.4px #111">1</div>
<div class="a" style="left:633px;top:130px;width:154px;height:51px;border:5px solid #ffcb00"></div>
<div class="num" style="left:557.0px;top:172.0px"></div>
<div class="num" style="left:689.0px;top:171.6px">2</div>
<div class="num" style="left:846.0px;top:171.8px">3</div>
<div class="num" style="left:1216.0px;top:178.0px">4</div>
<div class="num" style="left:1262.0px;top:178.0px">5</div>
<div class="num" style="left:58.0px;top:282.7px">6</div>
<svg class="a" style="left:0;top:0" width="1397" height="779"><path d="M573.9 182.9H578V199.7H573.9V187.8L570.5 189.2V186.0Z" fill="#000"/></svg>
<div class="a" style="left:1396px;top:0;width:1px;height:779px;background:#5a5a5a"></div>
<div class="a" style="left:0;top:778px;width:1397px;height:1px;background:#5a5a5a"></div>
</body></html>
